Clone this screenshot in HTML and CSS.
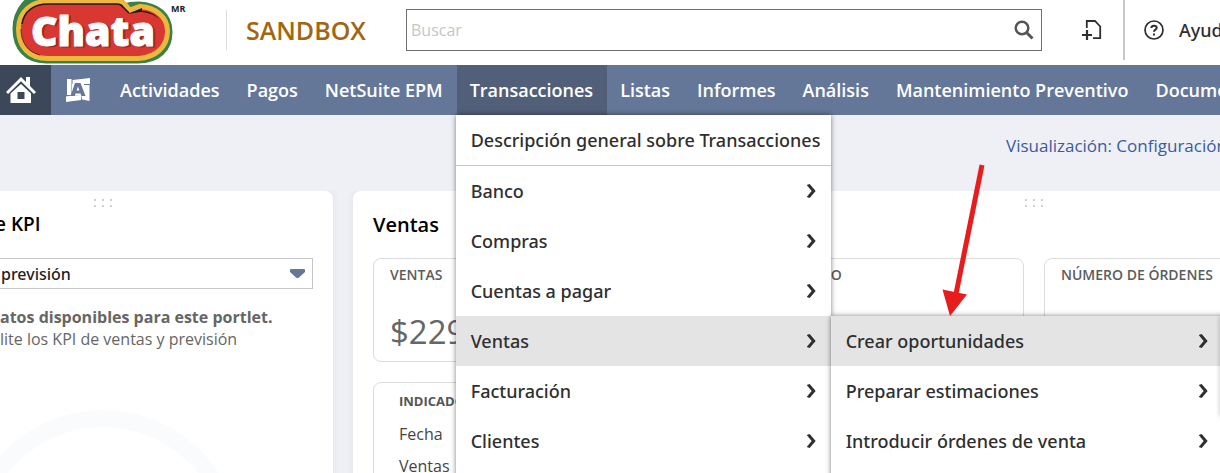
FILE: index.html
```html
<!DOCTYPE html>
<html lang="es">
<head>
<meta charset="utf-8">
<title>Sandbox</title>
<link rel="stylesheet" href="styles.css">
</head>
<body>
<header class="header">
  <a class="brand" href="#" aria-label="Chata">
    <svg class="brand-logo" width="190" height="65" viewBox="0 0 190 65">
      <defs>
        <path id="shape" d="M46 -6H118L124 6Q130 4 139 4C157 5 170 14 170 32C170 50 158 61 138 61H46C26 61 15 48 15 29C15 10 28 -6 46 -6Z"/>
        <path id="plate" d="M48 4H118Q121 4 123 6L129 13L140 9C154 10 165 18 165 31C165 46 154 55 138 56H48C30 56 21 45 21 29C21 13 33 4 48 4Z"/>
      </defs>
      <use href="#shape" fill="#3b8045" stroke="#3b8045" stroke-width="5"/>
      <use href="#plate" fill="#edb93d" stroke="#edb93d" stroke-width="10"/>
      <use href="#plate" fill="#d93732"/>
      <path d="M22 24C24 11 34 4 48 4H117Q121 4 123 7L129 13" fill="none" stroke="#241611" stroke-width="1.500"/>
      <path d="M21 29C21 43 28 52 40 55" fill="none" stroke="#6b2a1b" stroke-width="1"/>
      <path d="M128 14L142 8V11C149 11 155 14 159 19C153 14 147 12 140 12Z" fill="#241611"/>
      <text class="logo-shadow" x="33" y="47">Chata</text>
      <text class="logo-word" x="31" y="46">Chata</text>
      <text class="logo-mark" x="171" y="12">MR</text>
    </svg>
  </a>
  <strong class="environment">SANDBOX</strong>
  <form class="search">
    <input class="search-input" type="search" placeholder="Buscar" aria-label="Buscar">
    <button class="search-button" type="button" aria-label="Buscar">
      <svg width="20" height="20" viewBox="0 0 20 20" fill="none" stroke="#555"><circle cx="8" cy="8" r="6.300" stroke-width="2.500"/><path d="M12.500 12.500L18.500 18.500" stroke-width="3"/></svg>
    </button>
  </form>
  <div class="tools">
    <button class="tool" type="button" aria-label="Crear nuevo">
      <svg width="20" height="20" viewBox="0 0 20 20" fill="none" stroke="#2f2f2f"><path d="M4.800 8V1H13L18.200 6.500V18.200H11" stroke-width="1.800"/><path d="M5 10V20M0 15H10" stroke-width="2.200"/></svg>
    </button>
    <a class="help" href="#">
      <svg width="20" height="20" viewBox="0 0 20 20" fill="none" stroke="#2f2f2f"><circle cx="10" cy="10" r="9" stroke-width="1.700"/><path d="M7.300 8C7.300 5 12.700 4.800 12.700 7.700C12.700 9.700 10 9.600 10 11.800M10 13.400V15.500" stroke-width="2"/></svg>
      Ayuda
    </a>
  </div>
</header>

<nav class="nav">
  <ul class="nav-list">
    <li><a class="nav-link nav-home" href="#" aria-label="Inicio">
      <svg width="30" height="28" viewBox="0 0 30 28" fill="#fff"><path d="M15 1L20 6V1H24V10L30 16L28 18L15 5.300L2 18L0 16Z"/><path fill-rule="evenodd" d="M15 8L25 17.500V27H4.500V17.500ZM11.500 16V23H18.500V16Z"/></svg>
    </a></li>
    <li><a class="nav-link nav-recent" href="#" aria-label="Accesos directos">
      <svg width="24" height="24" viewBox="0 0 24 24"><path fill="#fff" d="M1 1H5.500V17H1ZM6.500 2L24 0V6H6.500ZM6 6H18V17H6ZM18 7H23.500V23L16 21.500L15 16H18ZM0 18.500L6 17.500L15 17V22L0 24Z"/><path fill="#647799" fill-rule="evenodd" d="M9 5H14.500L19.500 18H15.500L14.500 15.500H9.500L8.700 18H4.500ZM12 8.500L10.600 12.500H13.400Z"/></svg>
    </a></li>
    <li><a class="nav-link" href="#">Actividades</a></li>
    <li><a class="nav-link" href="#">Pagos</a></li>
    <li><a class="nav-link" href="#">NetSuite EPM</a></li>
    <li class="nav-open"><a class="nav-link nav-current" href="#">Transacciones</a>
      <ul class="menu">
        <li class="menu-overview"><a class="menu-link" href="#">Descripción general sobre Transacciones</a></li>
        <li><a class="menu-link has-children" href="#">Banco</a></li>
        <li><a class="menu-link has-children" href="#">Compras</a></li>
        <li><a class="menu-link has-children" href="#">Cuentas a pagar</a></li>
        <li class="menu-open"><a class="menu-link has-children menu-current" href="#">Ventas</a>
          <ul class="menu submenu">
            <li class="menu-open"><a class="menu-link has-children menu-current" href="#">Crear oportunidades</a></li>
            <li><a class="menu-link has-children" href="#">Preparar estimaciones</a></li>
            <li><a class="menu-link has-children" href="#">Introducir órdenes de venta</a></li>
          </ul>
        </li>
        <li><a class="menu-link has-children" href="#">Facturación</a></li>
        <li><a class="menu-link has-children" href="#">Clientes</a></li>
      </ul>
    </li>
    <li><a class="nav-link" href="#">Listas</a></li>
    <li><a class="nav-link" href="#">Informes</a></li>
    <li><a class="nav-link" href="#">Análisis</a></li>
    <li><a class="nav-link" href="#">Mantenimiento Preventivo</a></li>
    <li><a class="nav-link" href="#">Documentos</a></li>
  </ul>
</nav>

<main class="page">
  <div class="page-tools"><a class="page-link" href="#">Visualización: Configuración</a></div>
  <div class="dashboard">
    <section class="portlet portlet-kpi">
      <span class="grip"></span>
      <h2 class="portlet-title">e KPI</h2>
      <div class="select-wrap">
        <select class="kpi-select" aria-label="KPI"><option>previsión</option></select>
        <svg class="select-arrow" width="15" height="9" viewBox="0 0 15 9"><path d="M1 0H14Q15 0 15 1V3L9 8.500Q7.500 9.500 6 8.500L0 3V1Q0 0 1 0Z" fill="#647799"/></svg>
      </div>
      <p class="empty"><strong>atos disponibles para este portlet.</strong><br>lite los KPI de ventas y previsión</p>
      <div class="ring"></div>
    </section>
    <section class="portlet portlet-sales">
      <span class="grip"></span>
      <h2 class="portlet-title">Ventas</h2>
      <div class="cards">
        <article class="card"><h3 class="card-title">VENTAS</h3><p class="card-value">$229</p></article>
        <article class="card"><h3 class="card-title">NETO PROMEDIO</h3></article>
        <article class="card"><h3 class="card-title">NÚMERO DE ÓRDENES</h3></article>
        <article class="card"></article>
      </div>
      <div class="card indicators">
        <table class="indicator-table">
          <thead><tr><th scope="col">INDICADOR</th></tr></thead>
          <tbody><tr><td>Fecha</td></tr><tr><td>Ventas</td></tr></tbody>
        </table>
      </div>
    </section>
  </div>
</main>

<svg class="pointer" width="44" height="152" viewBox="0 0 44 152" aria-hidden="true"><path d="M40 1L14 130" stroke="#e81c1c" stroke-width="5"/><path d="M0.500 125.500L25 130.500L8 152Z" fill="#e81c1c"/></svg>
</body>
</html>
```
FILE: styles.css
```css
* { box-sizing: border-box; }

body {
  margin: 0;
  height: 100vh;
  overflow: hidden;
  position: relative;
  background: #eff0f5;
  font-family: "Open Sans", sans-serif;
  color: #2f2f2f;
}

a { color: inherit; text-decoration: none; }
ul { list-style: none; margin: 0; padding: 0; }
h2, h3, p { margin: 0; }
svg { display: block; flex: none; }
button { border: 0; background: none; padding: 0; }

/* Header */
.header {
  display: flex;
  align-items: center;
  height: 65px;
  background: #fff;
  white-space: nowrap;
}
.brand { width: 226px; flex: none; }
.logo-word, .logo-shadow { font: 800 41px "Open Sans", sans-serif; stroke-width: 1; stroke-linejoin: round; }
.logo-word { fill: #fff; stroke: #fff; }
.logo-shadow { fill: #9c2a25; stroke: #9c2a25; }
.logo-mark { font: 700 9px "Open Sans", sans-serif; fill: #222; }
.environment {
  width: 180px;
  flex: none;
  height: 40px;
  margin-bottom: 5px;
  padding-left: 19px;
  border-left: 1px solid #ddd;
  line-height: 40px;
  font-size: 25px;
  font-weight: 600;
  color: #a3660f;
}
.search {
  flex: 1;
  display: flex;
  align-items: center;
  height: 42px;
  margin-bottom: 5px;
  padding: 0 7px 0 4px;
  border: 1px solid #6f6f6f;
}
.search-input {
  flex: 1;
  min-width: 0;
  border: 0;
  padding: 0;
  outline: 0;
  background: none;
  font: 16px "Open Sans", sans-serif;
}
.search-input::placeholder { color: #c6c6c6; }
.tools { display: flex; align-items: center; width: 178px; overflow: hidden; align-self: flex-start; }
.tool { padding: 0 21px 0 40px; }
.help {
  display: flex;
  align-items: center;
  gap: 15px;
  height: 60px;
  padding-left: 19px;
  border-left: 2px solid #c6c6c6;
  font: 500 18px "Noto Sans", "Open Sans", sans-serif;
}

/* Navigation */
.nav { height: 50px; background: #647799; }
.nav-list { display: flex; white-space: nowrap; }
.nav-link {
  display: flex;
  align-items: center;
  height: 50px;
  padding: 0 14px 0 13px;
  font-size: 18px;
  font-weight: 600;
  color: #fff;
}
.nav-home { padding: 0 15px 0 6px; background: #3d475a; }
.nav-recent { padding: 0 17px 0 15px; }
.nav-current { background: #525f79; }
.nav-open, .menu-open { position: relative; }

.menu {
  position: absolute;
  z-index: 2;
  top: 50px;
  left: -1px;
  width: 375px;
  padding-bottom: 50px;
  background: #fff;
  box-shadow: 0 0 5px rgba(0, 0, 0, 0.5);
}
.submenu { top: 0; left: 100%; width: 392px; }
.submenu .menu-open::before {
  content: "";
  position: absolute;
  top: 0;
  left: 390px;
  width: 2px;
  height: 100px;
  box-shadow: 0 0 5px rgba(0, 0, 0, 0.5);
}
.menu-overview { border-bottom: 1px solid #c6c6c6; }
.menu-link {
  display: flex;
  align-items: center;
  justify-content: space-between;
  height: 50px;
  padding: 0 15px;
  font: 500 18px "Noto Sans", "Open Sans", sans-serif;
  color: #2f2f2f;
}
.has-children::after {
  content: "";
  width: 9px;
  height: 14px;
  background: #2f2f2f;
  clip-path: polygon(0 1px, 3px 0, 9px 7px, 3px 14px, 0 13px, 5px 7px);
}
.menu-current { background: #e4e4e4; }

/* Dashboard */
.page-tools { height: 76px; padding-top: 18px; overflow: hidden; }
.page-link {
  display: block;
  width: 214px;
  margin-left: auto;
  white-space: nowrap;
  line-height: 25px;
  font-size: 17px;
  color: #3a5ba0;
}
.dashboard { display: flex; gap: 20px; margin-left: -127px; overflow: hidden; }
.portlet {
  flex: none;
  padding: 9px 20px 20px;
  border-radius: 8px;
  background: #fff;
  box-shadow: 0 0 8px rgba(0, 0, 0, 0.06);
}
.portlet-kpi { width: 460px; padding-left: 122px; }
.portlet-sales { width: 1362px; }
.grip {
  display: block;
  width: 18px;
  height: 8px;
  margin: -1px auto 0;
  background: conic-gradient(from 270deg at 2px 2px, #d0d0d0 90deg, transparent 0) 0 0 / 8px 6px;
}
.portlet-kpi .grip { margin-left: 99px; }
.portlet-title {
  margin: 4px 0 20px;
  line-height: 27px;
  font-size: 20px;
  font-weight: 600;
  color: #000;
}
.portlet-kpi .portlet-title { font-size: 19px; }
.select-wrap { position: relative; }
.kpi-select {
  appearance: none;
  display: block;
  width: 100%;
  height: 31px;
  padding: 0 5px;
  border: 1px solid #c6c6c6;
  background: #fff;
  font: 500 16px "Noto Sans", "Open Sans", sans-serif;
  color: #1f1f1f;
}
.select-arrow { position: absolute; right: 8px; top: 11px; }
.empty { margin-top: 17px; padding-left: 5px; line-height: 22px; font-size: 16px; color: #666; }
.ring {
  width: 276px;
  height: 276px;
  margin: 60px 0 0 -30px;
  border: 17px solid #fafbfd;
  border-radius: 50%;
}
.cards { display: grid; grid-template-columns: repeat(4, 1fr); gap: 20px; margin-bottom: 20px; }
.card { height: 104px; padding: 7px 16px; border: 1px solid #dcdcdc; border-radius: 8px; }
.card-title { line-height: 18px; font-size: 14px; font-weight: 600; color: #5c5c5c; }
.card-value { margin-top: 25px; line-height: 46px; font-size: 33px; color: #666; }
.indicators { height: auto; padding: 0 25px 20px; }
.indicator-table { border-collapse: collapse; text-align: left; }
.indicator-table th { padding: 0; height: 35px; font-size: 13px; font-weight: 700; color: #555; }
.indicator-table td { padding: 0; height: 32px; font-size: 16px; color: #444; }

.pointer { position: absolute; z-index: 3; left: 942px; top: 164px; }
```
